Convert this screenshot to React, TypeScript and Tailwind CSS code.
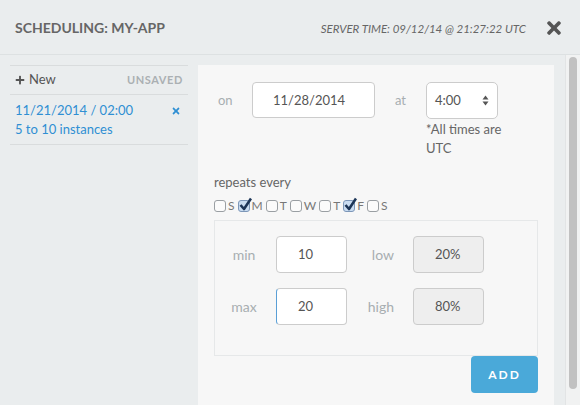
import { FaTimes, FaPlus } from "react-icons/fa";

const days = [
  { d: "S", on: false },
  { d: "M", on: true },
  { d: "T", on: false },
  { d: "W", on: false },
  { d: "T", on: false },
  { d: "F", on: true },
  { d: "S", on: false },
];

function Check({ on }: { on: boolean }) {
  return (
    <span className="relative inline-block w-[12px] h-[12px]">
      <span
        className={
          "absolute inset-0 rounded-[3px] border " +
          (on ? "border-[#7d97b8] bg-[#c9dcf1]" : "border-[#9a9fa3] bg-[#fbfbfb]")
        }
      />
      {on && (
        <svg className="absolute left-[1px] top-[-3px]" width="13" height="14" viewBox="0 0 13 14">
          <path d="M1.5 8 L5 12 L12 1.5" fill="none" stroke="#1c3557" strokeWidth="2.6" strokeLinejoin="round" />
        </svg>
      )}
    </span>
  );
}

export default function App() {
  const font = { fontFamily: "Lato, 'Open Sans', sans-serif" };
  return (
    <div className="w-[580px] h-[405px] overflow-hidden bg-[#eaedee] flex flex-col text-[#555]" style={font}>
      {/* header */}
      <div className="h-[55px] shrink-0 border-b border-[#dde1e2] flex items-center pl-[15px] pr-[16px]">
        <h1 className="text-[14px] font-bold text-[#666]">SCHEDULING: MY-APP</h1>
        <span className="ml-auto mt-[4px] text-[11.5px] italic text-[#666]">SERVER TIME: 09/12/14 @ 21:27:22 UTC</span>
        <FaTimes className="ml-[18px] mt-[1px] text-[#555]" size={20} />
      </div>

      <div className="flex flex-1 min-h-0">
        {/* sidebar */}
        <div className="w-[178px] ml-[10px] mt-[10px] shrink-0">
          <div className="h-[30px] border-t border-b border-[#d9dcdd] flex items-center px-[5px]">
            <FaPlus className="text-[#555]" size={10} />
            <span className="ml-[4px] text-[13px] text-[#555]">New</span>
            <span className="ml-auto text-[11px] font-bold tracking-[0.6px] text-[#aab0b3]">UNSAVED</span>
          </div>
          <div className="h-[50px] border-b border-[#d9dcdd] px-[5px] pt-[6px] flex text-[13px] leading-[19px] text-[#2f8fd3]">
            <div>
              <div>11/21/2014 / 02:00</div>
              <div>5 to 10 instances</div>
            </div>
            <FaTimes className="ml-auto mt-[5px] mr-[2px]" size={10} />
          </div>
        </div>

        {/* main panel */}
        <div className="w-[356px] ml-[10px] mt-[10px] bg-[#f7f7f7] shrink-0 px-[16px] pt-[17px] text-[13px]">
          <div className="flex items-start">
            <span className="w-[38px] pl-[4px] h-[36px] leading-[36px] text-[#a7aeb1]">on</span>
            <div className="w-[123px] h-[36px] rounded-[4px] border border-[#ccc] bg-white pl-[20px] leading-[34px] text-[#555]">
              11/28/2014
            </div>
            <span className="w-[51px] text-center h-[36px] leading-[36px] text-[#a7aeb1]">at</span>
            <div>
              <div className="w-[72px] h-[37px] rounded-[5px] border border-[#ccc] bg-white pl-[8px] pr-[8px] flex items-center text-[#555]">
                <span>4:00</span>
                <svg className="ml-auto" width="7" height="11" viewBox="0 0 7 11">
                  <path d="M0.5 4.5 L3.5 0.5 L6.5 4.5 Z M0.5 6.5 L3.5 10.5 L6.5 6.5 Z" fill="#555" />
                </svg>
              </div>
              <div className="mt-[1px] leading-[19px] text-[#666] w-[90px]">*All times are UTC</div>
            </div>
          </div>

          <div className="mt-[15px] text-[#666] leading-[18px]">repeats every</div>
          <div className="mt-[6px] flex items-center gap-[2px] text-[12px] text-[#777]">
            {days.map((x, i) => (
              <span key={i} className="flex items-center gap-[2px] mr-[1px]">
                <Check on={x.on} />
                <span>{x.d}</span>
              </span>
            ))}
          </div>

          <div className="mt-[5px] h-[136px] border border-[#e6e8e9] pt-[15px]">
            {[
              { l: "min", v: "10", l2: "low", v2: "20%", focus: false },
              { l: "max", v: "20", l2: "high", v2: "80%", focus: true },
            ].map((r, i) => (
              <div key={i} className={"flex items-center " + (i ? "mt-[15px]" : "")}>
                <span className="w-[58px] text-center text-[14px] text-[#a7aeb1]">{r.l}</span>
                <div
                  className={
                    "ml-[3px] w-[71px] h-[37px] rounded-[4px] border border-[#ccc] bg-white pl-[21px] leading-[35px] text-[#555] " +
                    (r.focus ? "border-l-[#5a9fd6]" : "")
                  }
                >
                  {r.v}
                </div>
                <span className="w-[47px] text-right text-[14px] text-[#a7aeb1]">{r.l2}</span>
                <div className="ml-[19px] w-[71px] h-[37px] rounded-[4px] border border-[#ccc] bg-[#eeeeee] pl-[21px] leading-[35px] text-[#555]">
                  {r.v2}
                </div>
              </div>
            ))}
          </div>

          <div className="flex justify-end">
            <button className="w-[67px] h-[37px] rounded-[4px] bg-[#4aa9d9] text-white text-[12px] font-bold tracking-[2px]">
              ADD
            </button>
          </div>
        </div>

        {/* scrollbar */}
        <div className="ml-auto w-[15px] border-l border-[#e2e4e5] bg-[#f1f2f2] pt-[2px] flex justify-center">
          <div className="w-[8px] h-[332px] rounded-full bg-[#c1c1c1]" />
        </div>
      </div>
    </div>
  );
}
